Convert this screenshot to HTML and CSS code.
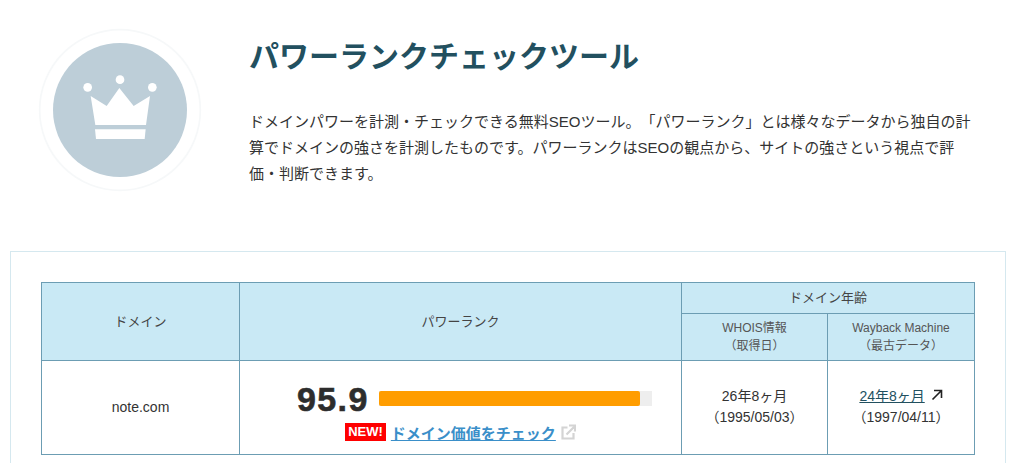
FILE: index.html
```html
<!DOCTYPE html>
<html lang="ja">
<head>
  <meta charset="UTF-8">
  <title>パワーランクチェックツール</title>
  <link rel="stylesheet" href="styles.css">
</head>
<body>
  <div class="header">
    <svg class="header-icon" viewBox="0 0 600 600" width="200" height="200">
      <circle cx="300" cy="300" r="241" fill="#fff" stroke="#f6f8f9" stroke-width="5"/>
      <circle cx="300" cy="300" r="201" fill="#bdced8"/>
      <path fill="#fff" d="M212 258L260 288L298 234L341 288L390 258L378 345H226Z"/>
      <path fill="#fff" d="M225 358H377L374 387H228Z"/>
      <circle cx="203" cy="232" r="13" fill="#fff"/>
      <circle cx="300" cy="209" r="13" fill="#fff"/>
      <circle cx="397" cy="232" r="13" fill="#fff"/>
    </svg>
    <div class="header-text">
      <h1>パワーランクチェックツール</h1>
      <p>ドメインパワーを計測・チェックできる無料SEOツール。「パワーランク」とは様々なデータから独自の計算でドメインの強さを計測したものです。パワーランクはSEOの観点から、サイトの強さという視点で評価・判断できます。</p>
    </div>
  </div>

  <div class="panel">
    <table class="rank-table">
      <colgroup>
        <col class="col-domain">
        <col class="col-rank">
        <col class="col-whois">
        <col class="col-wayback">
      </colgroup>
      <tr class="row-top">
        <th class="head-tall" rowspan="2">ドメイン</th>
        <th class="head-tall" rowspan="2">パワーランク</th>
        <th class="head-group" colspan="2">ドメイン年齢</th>
      </tr>
      <tr class="row-sub">
        <th class="small">WHOIS情報<br>（取得日）</th>
        <th class="small">Wayback Machine<br>（最古データ）</th>
      </tr>
      <tr class="row-data">
        <td class="plain">note.com</td>
        <td class="rank-cell">
          <div class="score-line">
            <span class="score">95.9</span>
            <span class="bar"><span class="bar-fill" style="width: 95.5%"></span></span>
          </div>
          <div class="value-line">
            <span class="new-badge">NEW!</span>
            <a href="#" class="value-link">ドメイン価値をチェック</a>
            <svg class="ext-icon" viewBox="0 0 15 16" width="15" height="16">
              <path fill="none" stroke="#d4d4d4" stroke-width="2.2" d="M6.5 3.5H1.5V14.5H12.5V9"/>
              <path fill="none" stroke="#d4d4d4" stroke-width="2.2" d="M5.5 10.5L13 3M8 1.5H14V7.5"/>
            </svg>
          </div>
        </td>
        <td class="plain age">26年8ヶ月<br>（1995/05/03）</td>
        <td class="plain age">
          <a href="#" class="age-link">24年8ヶ月</a>
          <svg class="arrow-icon" viewBox="0 0 12 12" width="12" height="12">
            <path fill="none" stroke="#222" stroke-width="1.6" d="M1.5 10.5L10 2M3 1.5H10.5V9"/>
          </svg>
          <br>（1997/04/11）
        </td>
      </tr>
    </table>
  </div>
</body>
</html>
```

FILE: styles.css
```css
body {
  margin: 0;
  background-color: #fff;
  color: #333;
  font-family: "Liberation Sans", "Noto Sans CJK JP", sans-serif;
  font-size: 14px;
  text-spacing-trim: space-all;
}

/* Header */
.header {
  display: flex;
  padding: 10px 40px 0 20px;
  height: 251px;
  box-sizing: border-box;
}

.header-icon {
  flex: none;
}

.header-text {
  margin-left: 29px;
  width: 724px;
}

.header-text h1 {
  margin: 20px 0 0 0;
  color: #22505f;
  font-size: 30px;
  line-height: 54px;
  font-weight: bold;
}

.header-text p {
  margin: 25px 0 0 0;
  font-size: 15px;
  line-height: 26px;
}

/* Table panel */
.panel {
  margin: 0 12px 0 10px;
  height: 212px;
  box-sizing: border-box;
  padding: 30px 30px 0 30px;
  border: 1px solid #d5e8ef;
  border-bottom: none;
}

.rank-table {
  width: 934px;
  table-layout: fixed;
  border-collapse: collapse;
  text-align: center;
}

.col-domain { width: 198px; }
.col-rank { width: 442px; }
.col-whois { width: 146px; }
.col-wayback { width: 147px; }

.rank-table th,
.rank-table td {
  border: 1px solid #6c9db3;
  padding: 0;
  font-weight: normal;
}

.rank-table th {
  background-color: #c9e9f5;
  font-size: 13px;
  color: #444;
}

.rank-table th.head-tall {
  padding-bottom: 2px;
}

.rank-table th.head-group {
  padding-bottom: 3px;
}

.rank-table th.small {
  font-size: 12px;
  line-height: 18px;
  color: #555;
}

.row-top { height: 31px; }
.row-sub { height: 47px; }
.row-data { height: 94px; }

.rank-table td.plain {
  padding-bottom: 2px;
}

.rank-table td.rank-cell {
  padding-top: 6px;
}

.score-line {
  display: flex;
  align-items: center;
  margin: 0 29px 0 57px;
}

.score {
  width: 82px;
  color: #2d2d2d;
  font-size: 34px;
  font-weight: bold;
  letter-spacing: 1.4px;
  -webkit-text-stroke: 0.6px #2d2d2d;
  line-height: 40px;
  text-align: left;
}

.bar {
  flex: 1;
  height: 15px;
  background-color: #eee;
}

.bar-fill {
  display: block;
  height: 15px;
  border-radius: 2px;
  background-color: #ff9d00;
}

.value-line {
  display: flex;
  align-items: center;
  justify-content: center;
  gap: 5px;
  margin-top: 3px;
}

.new-badge {
  padding: 0 3px;
  background-color: #f00;
  color: #fff;
  font-size: 13px;
  font-weight: bold;
  line-height: 18px;
}

.value-link {
  color: #3a8fc9;
  font-size: 15px;
  font-weight: bold;
}

.age {
  font-size: 14px;
  line-height: 21px;
}

.age-link {
  color: #22505f;
}

.arrow-icon {
  margin-left: 2px;
}
```
